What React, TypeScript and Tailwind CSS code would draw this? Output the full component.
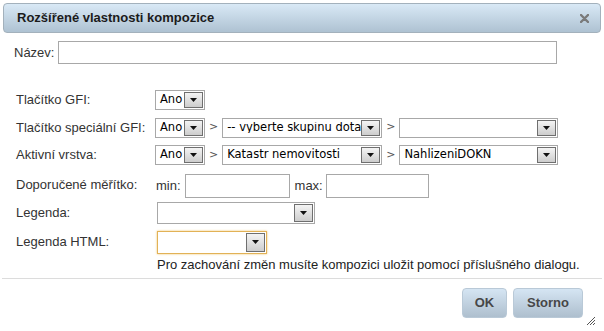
import type { ReactNode } from 'react'

const arial = "font-['Liberation_Sans',Arial,sans-serif]"
const dejavu = "font-['DejaVu_Sans',Verdana,sans-serif]"

function ArrowBox() {
  return (
    <div className="flex h-full w-[19px] shrink-0 items-center justify-center border border-[#6f6f6f] bg-gradient-to-b from-[#f4f4f4] to-[#cdcdcd]">
      <svg width="7" height="4" viewBox="0 0 7 4">
        <path d="M0 0h7L3.5 4z" fill="#111" />
      </svg>
    </div>
  )
}

interface FakeSelectProps {
  value?: string
  width: string
  height: string
  focused?: boolean
  clip?: boolean
}

function FakeSelect({ value = '', width, height, focused = false, clip = false }: FakeSelectProps) {
  return (
    <div
      className={`flex shrink-0 items-stretch border bg-white py-px pr-px ${width} ${height} ${
        focused ? 'border-[#e2b256] shadow-[0_0_2px_#f0c46a]' : 'border-[#a8a8a8]'
      }`}
    >
      <span
        className={`min-w-0 flex-1 self-center whitespace-nowrap pl-[4px] text-[11.5px] leading-none text-black ${dejavu} ${
          clip ? 'overflow-hidden' : ''
        }`}
      >
        {value}
      </span>
      <ArrowBox />
    </div>
  )
}

function Gt() {
  return <span className={`mx-[4px] text-[11px] text-[#555] ${dejavu}`}>&gt;</span>
}

function Row({ label, height, children }: { label: string; height: string; children: ReactNode }) {
  return (
    <div className={`flex items-center ${height}`}>
      <span className="w-[155px] shrink-0 whitespace-nowrap pl-[16px]">{label}</span>
      {children}
    </div>
  )
}

export default function App() {
  return (
    <div className={`h-[331px] w-[604px] overflow-hidden bg-white text-[13px] text-[#333] ${arial}`}>
      <div className="mx-[3px] mt-[3px] flex h-[30px] items-center justify-between rounded-[4px] border border-[#a3b1bc] bg-gradient-to-b from-[#d9e9f6] to-[#aec2d2] pl-[13px] pr-[11px]">
        <span className="text-[13px] font-bold text-[#1b1b1b]">Rozšířené vlastnosti kompozice</span>
        <svg width="9" height="9" viewBox="0 0 9 9">
          <path d="M1 1l7 7M8 1L1 8" stroke="#7a7a7a" strokeWidth="2.4" strokeLinecap="round" />
        </svg>
      </div>

      <div className="mt-[8px] flex h-[23px] items-center pl-[14px]">
        <span className="mr-[4px]">Název:</span>
        <div className="h-[23px] w-[499px] border border-[#a8a8a8] bg-white" />
      </div>

      <div className="mt-[22px]">
        <Row label="Tlačítko GFI:" height="h-[28px]">
          <FakeSelect value="Ano" width="w-[50px]" height="h-[20px]" />
        </Row>
        <Row label="Tlačítko speciální GFI:" height="h-[27px]">
          <FakeSelect value="Ano" width="w-[50px]" height="h-[20px]" />
          <Gt />
          <FakeSelect value="-- vyberte skupinu dota" width="w-[160px]" height="h-[20px]" clip />
          <Gt />
          <FakeSelect width="w-[159px]" height="h-[20px]" />
        </Row>
        <Row label="Aktivní vrstva:" height="h-[28px]">
          <FakeSelect value="Ano" width="w-[50px]" height="h-[20px]" />
          <Gt />
          <FakeSelect value="Katastr nemovitosti" width="w-[160px]" height="h-[20px]" />
          <Gt />
          <FakeSelect value="NahlizeniDOKN" width="w-[159px]" height="h-[20px]" />
        </Row>
        <div className="flex h-[30px] items-center">
          <span className="w-[156px] shrink-0 self-start whitespace-nowrap pl-[16px] pt-[6px]">Doporučené měřítko:</span>
          <span className="mr-[4px] pt-[3px]">min:</span>
          <div className="mt-[4px] h-[24px] w-[105px] border border-[#a8a8a8] bg-white" />
          <span className="ml-[5px] mr-[3px] pt-[3px]">max:</span>
          <div className="mt-[4px] h-[24px] w-[103px] border border-[#a8a8a8] bg-white" />
        </div>
        <Row label="Legenda:" height="h-[28px]">
          <div className="ml-[2px]">
            <FakeSelect width="w-[158px]" height="h-[22px]" />
          </div>
        </Row>
        <Row label="Legenda HTML:" height="h-[30px]">
          <div className="ml-[2px]">
            <FakeSelect width="w-[110px]" height="h-[23px]" focused />
          </div>
        </Row>
        <div className="pl-[157px] leading-[15px] text-[#222]">
          Pro zachování změn musíte kompozici uložit pomocí příslušného dialogu.
        </div>
      </div>

      <div className="mx-[2px] mt-[6px] h-px bg-[#dcdcdc]" />

      <div className="relative flex justify-end gap-[6px] pr-[21px] pt-[9px]">
        <button className="h-[30px] w-[45px] rounded-[4px] border border-[#b9c9d7] bg-gradient-to-b from-[#d5e5f3] to-[#aebfce] text-[13px] font-bold text-[#474747]">
          OK
        </button>
        <button className="h-[30px] w-[70px] rounded-[4px] border border-[#b9c9d7] bg-gradient-to-b from-[#d5e5f3] to-[#aebfce] text-[13px] font-bold text-[#474747]">
          Storno
        </button>
        <svg className="absolute right-[8px] top-[37px]" width="10" height="10" viewBox="0 0 10 10">
          <path d="M1 9L9 1M4 9L9 4M7 9L9 7" stroke="#555" strokeWidth="1" />
        </svg>
      </div>
    </div>
  )
}
